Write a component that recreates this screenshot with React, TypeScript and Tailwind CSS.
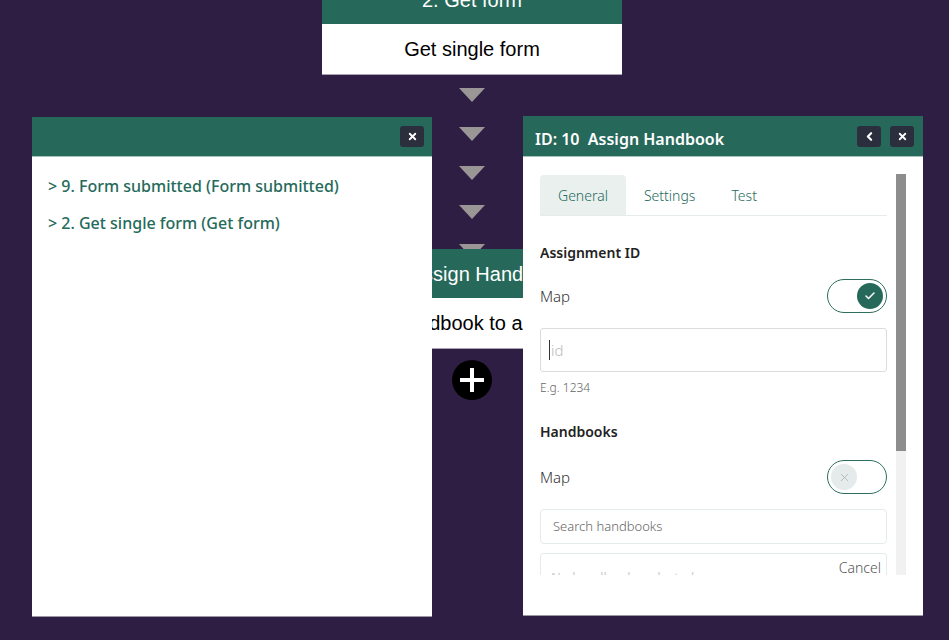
import { Check, X, ChevronLeft } from 'lucide-react';

const green = 'bg-[#26695a]';

function Arrow() {
  return (
    <svg width="26" height="14" viewBox="0 0 26 14" className="block">
      <polygon points="0,0 26,0 13,14" fill="#9b9696" />
    </svg>
  );
}

function FlowNode({ top, title, subtitle }: { top: number; title: string; subtitle: string }) {
  return (
    <div
      className="absolute left-[322px] w-[300px] border-b border-[#a9a3b4] font-['Liberation_Sans',Arial,sans-serif] text-[20px]"
      style={{ top }}
    >
      <div className={`${green} h-[49px] flex items-center justify-center text-white whitespace-nowrap overflow-hidden`}>
        {title}
      </div>
      <div className="bg-white h-[50px] flex items-center justify-center text-black whitespace-nowrap overflow-hidden">
        {subtitle}
      </div>
    </div>
  );
}

function HeaderButton({ children }: { children: React.ReactNode }) {
  return (
    <button className="w-[24px] h-[21px] rounded-[3px] bg-[#2b2f3d] flex items-center justify-center text-white">
      {children}
    </button>
  );
}

function Toggle({ on }: { on: boolean }) {
  return (
    <div
      className={`w-[60px] h-[34px] rounded-full border border-[#2d6e5f] bg-white flex items-center px-[3px] ${
        on ? 'justify-end' : 'justify-start'
      }`}
    >
      {on ? (
        <div className="w-[26px] h-[26px] rounded-full bg-[#26695a] flex items-center justify-center">
          <Check className="w-[12px] h-[12px] text-white" strokeWidth={3} />
        </div>
      ) : (
        <div className="w-[26px] h-[26px] rounded-full bg-[#e4ebea] flex items-center justify-center">
          <X className="w-[13px] h-[13px] text-[#a9b3b1]" strokeWidth={1.5} />
        </div>
      )}
    </div>
  );
}

export default function App() {
  return (
    <div className="relative w-[949px] h-[640px] overflow-hidden bg-[#2e1e44] font-['Noto_Sans',sans-serif]">
      {/* flow canvas */}
      <FlowNode top={-25} title="2. Get form" subtitle="Get single form" />

      <div className="absolute left-[459px] top-[88px] flex flex-col gap-[25px]">
        <Arrow />
        <Arrow />
        <Arrow />
        <Arrow />
        <Arrow />
      </div>

      <FlowNode top={249} title="10. Assign Handbook" subtitle="Assign handbook to assignment" />

      <div className="absolute left-[452px] top-[360px] w-[40px] h-[40px] rounded-full bg-black flex items-center justify-center">
        <svg width="26" height="26" viewBox="0 0 26 26">
          <rect x="11" y="1" width="4" height="24" fill="white" />
          <rect x="1" y="11" width="24" height="4" fill="white" />
        </svg>
      </div>

      {/* left panel */}
      <div className="absolute left-[32px] top-[117px] w-[400px] h-[499px] bg-white flex flex-col shadow-[0_1px_0_#9d97a6]">
        <div className={`${green} h-[40px] flex items-center justify-end pr-[8px] border-b border-[#a7c3bc]`}>
          <HeaderButton>
            <X className="w-[11px] h-[11px]" strokeWidth={4} />
          </HeaderButton>
        </div>
        <div className="flex flex-col gap-[14px] pt-[17px] pl-[16px] text-[16px] font-medium text-[#256a5b]">
          <div className="h-[23px] flex items-center">&gt; 9. Form submitted (Form submitted)</div>
          <div className="h-[23px] flex items-center">&gt; 2. Get single form (Get form)</div>
        </div>
      </div>

      {/* right panel */}
      <div className="absolute left-[523px] top-[116px] w-[400px] h-[499px] bg-white flex flex-col shadow-[0_1px_0_#9d97a6]">
        <div className={`${green} h-[41px] flex items-center justify-between pl-[12px] pr-[9px] border-b border-[#a7c3bc]`}>
          <div className="text-white text-[16px] font-semibold whitespace-pre pt-[5px]">ID: 10  Assign Handbook</div>
          <div className="flex gap-[9px]">
            <HeaderButton>
              <ChevronLeft className="w-[13px] h-[13px]" strokeWidth={4} />
            </HeaderButton>
            <HeaderButton>
              <X className="w-[11px] h-[11px]" strokeWidth={4} />
            </HeaderButton>
          </div>
        </div>

        <div className="flex pl-[17px] pt-[17px] gap-[9px]">
          <div className="w-[347px] h-[401px] overflow-hidden">
            {/* tabs */}
            <div className="flex border-b border-[#e6eceb] mt-[1px] text-[14px] font-light text-[#256a5b]">
              <div className="h-[40px] px-[18px] flex items-center bg-[#e9f0ee] rounded-t-[4px]">General</div>
              <div className="h-[40px] px-[18px] flex items-center">Settings</div>
              <div className="h-[40px] px-[18px] flex items-center">Test</div>
            </div>

            <div className="mt-[26px] text-[14px] font-semibold text-[#222] h-[20px] flex items-center">Assignment ID</div>
            <div className="mt-[17px] flex items-center justify-between h-[34px]">
              <span className="text-[15px] font-light text-[#333]">Map</span>
              <Toggle on />
            </div>
            <div className="mt-[15px] h-[44px] border border-[#dcdcdc] rounded-[3px] flex items-center pl-[8px] text-[15px] font-light text-[#bbb]">
              <span className="w-px h-[20px] bg-[#333] mr-[1px]" />
              id
            </div>
            <div className="mt-[8px] text-[12px] font-light text-[#666] h-[16px] flex items-center">E.g. 1234</div>

            <div className="mt-[25px] text-[14px] font-semibold text-[#222] h-[20px] flex items-center">Handbooks</div>
            <div className="mt-[19px] flex items-center justify-between h-[34px]">
              <span className="text-[15px] font-light text-[#333]">Map</span>
              <Toggle on={false} />
            </div>
            <div className="mt-[15px] h-[35px] border border-[#e3ecea] rounded-[4px] flex items-center pl-[12px] text-[13px] font-light text-[#666]">
              Search handbooks
            </div>
            <div className="mt-[9px] h-[40px] border border-[#e3ecea] rounded-[3px] relative">
              <span className="absolute right-[5px] top-[3px] text-[14px] font-light text-[#555]">Cancel</span>
              <span className="absolute left-[10px] top-[14px] text-[13px] text-[#ccc]">No handbooks selected</span>
            </div>
          </div>
          <div className="w-[10px] h-[401px] bg-[#f1f1f1] flex flex-col">
            <div className="h-[277px] bg-[#8d8d8d]" />
          </div>
        </div>
      </div>
    </div>
  );
}
